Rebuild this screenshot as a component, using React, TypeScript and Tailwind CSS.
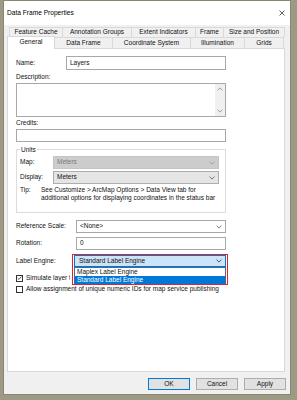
import React from "react";

const Chevron = ({ color = "#5a5a5a" }: { color?: string }) => (
  <svg width="6" height="4" viewBox="0 0 6 4" className="shrink-0">
    <path d="M0.6 0.6 L3 3.1 L5.4 0.6" fill="none" stroke={color} strokeWidth="0.8" />
  </svg>
);

const ChevronUp = () => (
  <svg width="6" height="4" viewBox="0 0 6 4">
    <path d="M0.6 3.4 L3 0.9 L5.4 3.4" fill="none" stroke="#8a8a8a" strokeWidth="0.8" />
  </svg>
);

const Check = () => (
  <svg width="6" height="6" viewBox="0 0 6 6">
    <path d="M0.8 3.1 L2.4 4.7 L5.3 1.2" fill="none" stroke="#222" strokeWidth="0.9" />
  </svg>
);

export default function App() {
  return (
    <div className="w-[297px] h-[400px] overflow-hidden bg-[#9c9a84] font-['Liberation_Sans',Arial,sans-serif] text-[6.5px] leading-none text-[#111]">
      <div className="ml-[3px] w-[288px] h-[395px] bg-[#f0f0f0] border border-[#8a8672] flex flex-col">
        {/* title bar */}
        <div className="h-[24px] bg-white flex items-center justify-between pl-[3px] pr-[5px] shrink-0">
          <span className="text-[6.6px] text-black">Data Frame Properties</span>
          <svg width="6" height="6" viewBox="0 0 6 6">
            <path d="M0.5 0.5 L5.5 5.5 M5.5 0.5 L0.5 5.5" stroke="#222" strokeWidth="0.7" />
          </svg>
        </div>

        {/* tabs row 1 */}
        <div className="mt-[2px] h-[10px] flex pl-[5px] shrink-0">
          <div className="w-[53px] h-full border-l border-t border-[#d9d9d9] flex items-center justify-center">Feature Cache</div>
          <div className="w-[69px] h-full border-l border-t border-[#d9d9d9] flex items-center justify-center">Annotation Groups</div>
          <div className="w-[64px] h-full border-l border-t border-[#d9d9d9] flex items-center justify-center">Extent Indicators</div>
          <div className="w-[28px] h-full border-l border-t border-[#d9d9d9] flex items-center justify-center">Frame</div>
          <div className="w-[62px] h-full border-l border-t border-r border-[#d9d9d9] flex items-center justify-center">Size and Position</div>
        </div>
        {/* tabs row 2 */}
        <div className="h-[11px] flex items-end pl-[3px] shrink-0">
          <div className="relative z-10 w-[48px] h-[13px] -mb-[1px] bg-white border-l border-t border-r border-[#d9d9d9] flex items-center justify-center pb-[1px]">General</div>
          <div className="w-[57px] h-full border-t border-[#d9d9d9] flex items-center justify-center">Data Frame</div>
          <div className="w-[78px] h-full border-l border-t border-[#d9d9d9] flex items-center justify-center">Coordinate System</div>
          <div className="w-[54px] h-full border-l border-t border-[#d9d9d9] flex items-center justify-center">Illumination</div>
          <div className="w-[40px] h-full border-l border-t border-r border-[#d9d9d9] flex items-center justify-center">Grids</div>
        </div>

        {/* panel */}
        <div className="ml-[3px] w-[278px] h-[324px] bg-white border border-[#d9d9d9] flex flex-col pl-[8px] shrink-0">
          {/* Name */}
          <div className="mt-[7px] h-[14px] flex items-center">
            <span className="w-[50px]">Name:</span>
            <div className="w-[160px] h-full border border-[#a8a8a8] flex items-center pl-[3px]">Layers</div>
          </div>
          {/* Description */}
          <div className="mt-[2px] h-[10px] flex items-center">Description:</div>
          <div className="mt-[1px] w-[210px] h-[34px] border border-[#a8a8a8] flex justify-end">
            <div className="w-[10px] h-full bg-[#f0f0f0] flex flex-col items-center justify-between py-[3px]">
              <ChevronUp />
              <Chevron color="#8a8a8a" />
            </div>
          </div>
          {/* Credits */}
          <div className="mt-[1px] h-[10px] flex items-center">Credits:</div>
          <div className="mt-[1px] w-[210px] h-[13px] border border-[#a8a8a8]" />

          {/* Units group */}
          <div className="mt-[7px] w-[210px] h-[64px] border border-[#dcdcdc] flex flex-col pl-[3px]">
            <div className="-mt-[4px] h-[8px] w-fit bg-white px-[1px] flex items-center">Units</div>
            <div className="mt-[2px] h-[13px] flex items-center">
              <span className="w-[33px]">Map:</span>
              <div className="w-[166px] h-full bg-[#cccccc] border border-[#c4c4c4] flex items-center justify-between pl-[3px] pr-[3px] text-[#7a7a7a]">
                <span>Meters</span>
                <Chevron color="#9a9a9a" />
              </div>
            </div>
            <div className="mt-[2px] h-[13px] flex items-center">
              <span className="w-[33px]">Display:</span>
              <div className="w-[166px] h-full bg-[#e5e5e5] border border-[#adadad] flex items-center justify-between pl-[3px] pr-[3px]">
                <span>Meters</span>
                <Chevron />
              </div>
            </div>
            <div className="mt-[2px] flex leading-[8px]">
              <span className="w-[21px] shrink-0">Tip:</span>
              <div className="flex flex-col">
                <span>See Customize &gt; ArcMap Options &gt; Data View tab for</span>
                <span>additional options for displaying coordinates in the status bar</span>
              </div>
            </div>
          </div>

          {/* Reference scale */}
          <div className="mt-[7px] h-[13px] flex items-center">
            <span className="w-[60px]">Reference Scale:</span>
            <div className="w-[150px] h-full border border-[#a8a8a8] flex items-center justify-between pl-[3px] pr-[3px]">
              <span>&lt;None&gt;</span>
              <Chevron />
            </div>
          </div>
          {/* Rotation */}
          <div className="mt-[4px] h-[13px] flex items-center">
            <span className="w-[60px]">Rotation:</span>
            <div className="w-[150px] h-full border border-[#a8a8a8] flex items-center pl-[3px]">0</div>
          </div>
          {/* Label engine */}
          <div className="mt-[5px] h-[12px] flex items-center">
            <span className="w-[58px]">Label Engine:</span>
            <div className="relative z-10 w-[152px] h-full">
              <div className="w-full h-full bg-[#cce4f7] border border-[#0078d7] flex items-center justify-between pl-[4px] pr-[3px]">
                <span>Standard Label Engine</span>
                <Chevron color="#333" />
              </div>
              <div className="absolute left-0 top-[12px] w-full bg-white border border-[#4a6a8a] flex flex-col">
                <div className="h-[8px] flex items-center pl-[2px]">Maplex Label Engine</div>
                <div className="h-[8px] flex items-center pl-[2px] bg-[#0078d7] text-white">Standard Label Engine</div>
              </div>
              <div className="absolute -left-[2px] -top-[1px] w-[156px] h-[31px] border-[1.5px] border-[#e3232b]" />
            </div>
          </div>
          {/* Checkboxes */}
          <div className="mt-[6px] h-[10px] flex items-center">
            <div className="w-[7px] h-[7px] border border-[#333] bg-white flex items-center justify-center shrink-0">
              <Check />
            </div>
            <span className="ml-[3px] w-[44px] overflow-hidden whitespace-nowrap">Simulate layer transparency in legends</span>
          </div>
          <div className="mt-[1px] h-[10px] flex items-center">
            <div className="w-[7px] h-[7px] border border-[#333] bg-white shrink-0" />
            <span className="ml-[3px]">Allow assignment of unique numeric IDs for map service publishing</span>
          </div>
        </div>

        {/* buttons */}
        <div className="mt-[6px] h-[12px] flex justify-end gap-[6px] pr-[4px] shrink-0">
          <div className="w-[42px] h-full bg-[#e1e1e1] border border-[#0078d7] flex items-center justify-center">OK</div>
          <div className="w-[42px] h-full bg-[#e1e1e1] border border-[#adadad] flex items-center justify-center">Cancel</div>
          <div className="w-[42px] h-full bg-[#e1e1e1] border border-[#adadad] flex items-center justify-center">Apply</div>
        </div>
      </div>
    </div>
  );
}
